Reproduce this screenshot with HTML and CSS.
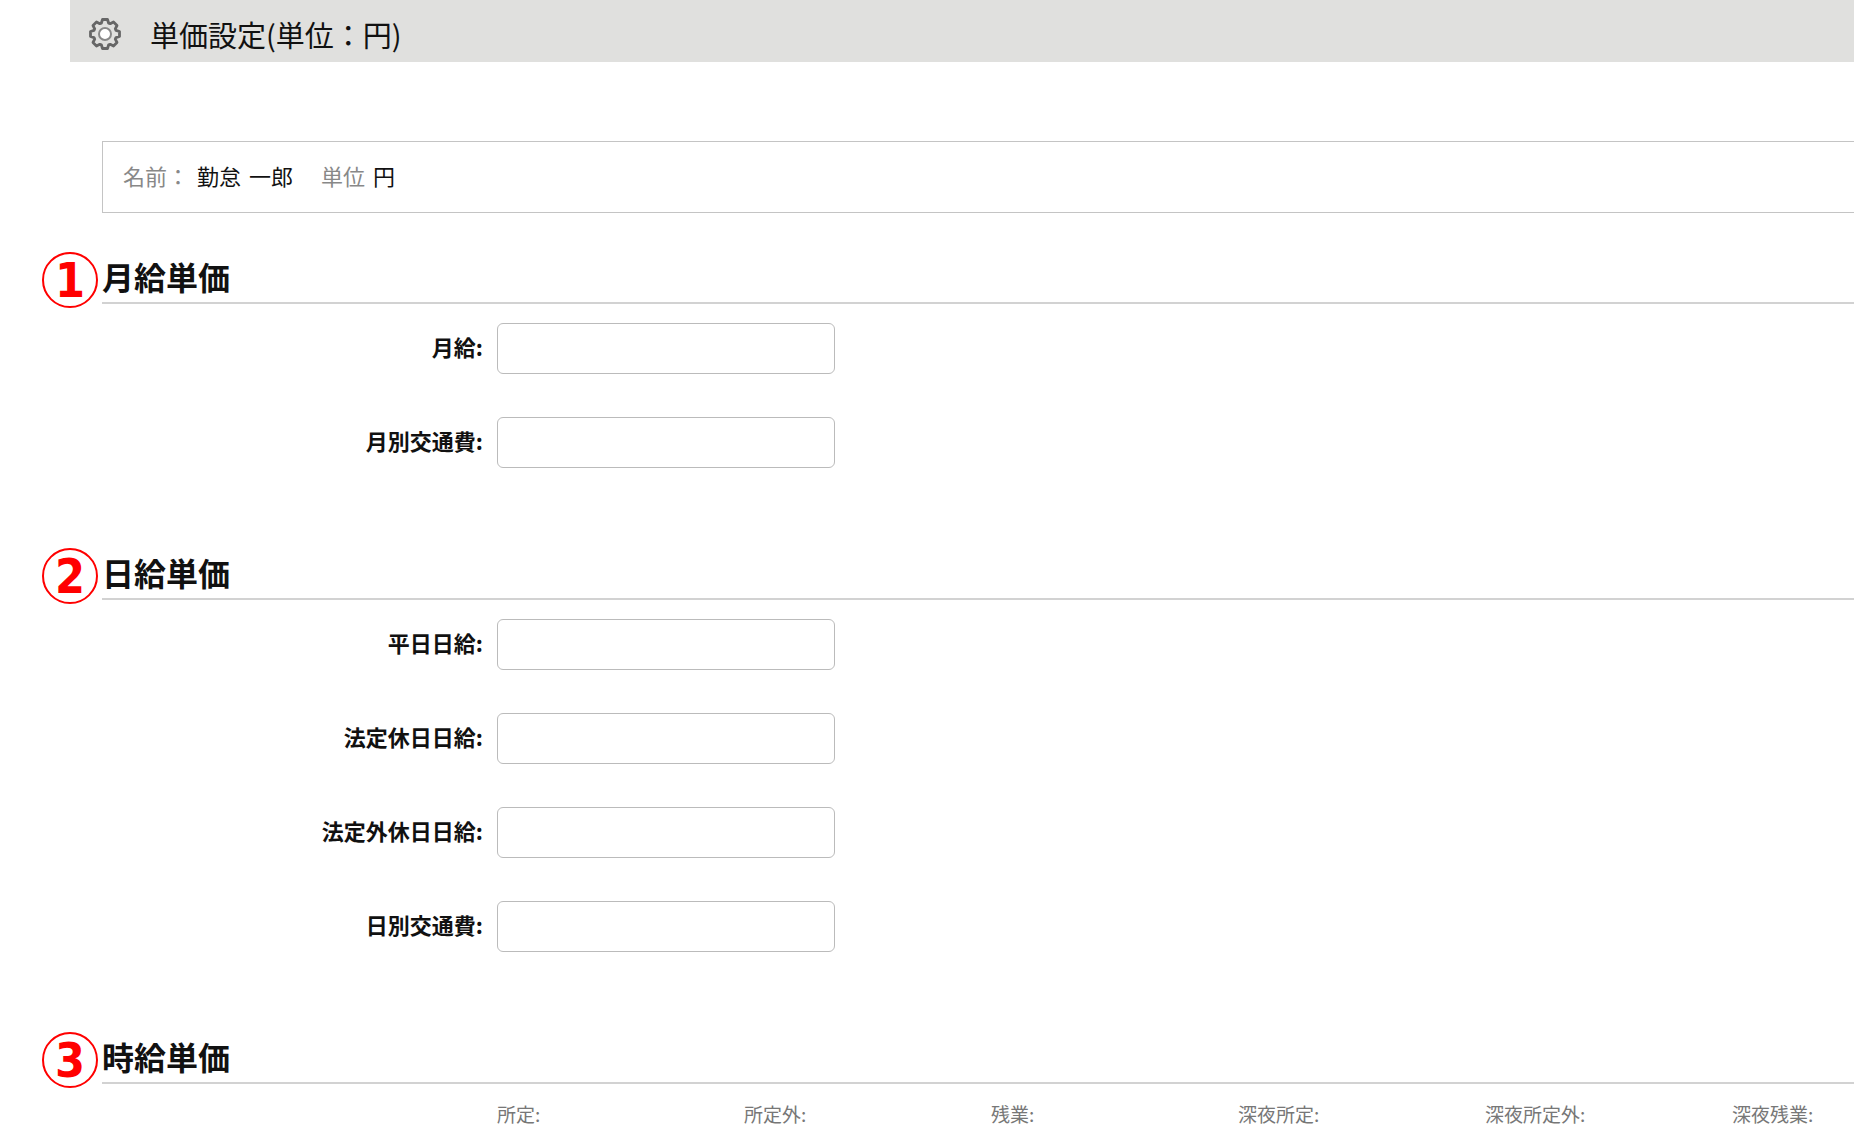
FILE: index.html
```html
<!DOCTYPE html>
<html lang="ja">
<head>
<meta charset="utf-8">
<title>単価設定</title>
<link rel="stylesheet" href="styles.css">
</head>
<body>
<header class="page-header">
  <svg class="gear" viewBox="-16 -16 32 32" aria-hidden="true">
    <path class="gear-body" d="M-2.5-14.5H2.5L3.6-11Q4.3-10.5 5.2-10.3L8.5-12L12-8.5L10.3-5.2Q10.5-4.3 11-3.6L14.5-2.5V2.5L11 3.6Q10.5 4.3 10.3 5.2L12 8.5L8.5 12L5.2 10.3Q4.3 10.5 3.6 11L2.5 14.5H-2.5L-3.6 11Q-4.3 10.5-5.2 10.3L-8.5 12L-12 8.5L-10.3 5.2Q-10.5 4.3-11 3.6L-14.5 2.5V-2.5L-11-3.6Q-10.5-4.3-10.3-5.2L-12-8.5L-8.5-12L-5.2-10.3Q-4.3-10.5-3.6-11Z"/>
    <circle class="gear-hole" r="6"/>
  </svg>
  <h1 class="page-title">単価設定(単位：円)</h1>
</header>
<main class="content">
  <div class="info">
    <span class="info-label">名前：</span>
    <span class="info-name"><span>勤怠</span> <span>一郎</span></span>
    <span class="info-label">単位</span>
    <span class="info-unit">円</span>
  </div>

  <section class="section">
    <h2 class="section-title"><span class="badge">1</span>月給単価</h2>
    <div class="fields">
      <label class="label" for="monthly">月給:</label>
      <input class="input" id="monthly" type="text">
      <label class="label" for="monthly-travel">月別交通費:</label>
      <input class="input" id="monthly-travel" type="text">
    </div>
  </section>

  <section class="section">
    <h2 class="section-title"><span class="badge">2</span>日給単価</h2>
    <div class="fields">
      <label class="label" for="weekday">平日日給:</label>
      <input class="input" id="weekday" type="text">
      <label class="label" for="legal-holiday">法定休日日給:</label>
      <input class="input" id="legal-holiday" type="text">
      <label class="label" for="other-holiday">法定外休日日給:</label>
      <input class="input" id="other-holiday" type="text">
      <label class="label" for="daily-travel">日別交通費:</label>
      <input class="input" id="daily-travel" type="text">
    </div>
  </section>

  <section class="section">
    <h2 class="section-title"><span class="badge">3</span>時給単価</h2>
    <table class="rates">
      <thead>
        <tr>
          <td class="rates-head"></td>
          <th scope="col">所定:</th>
          <th scope="col">所定外:</th>
          <th scope="col">残業:</th>
          <th scope="col">深夜所定:</th>
          <th scope="col">深夜所定外:</th>
          <th scope="col">深夜残業:</th>
        </tr>
      </thead>
    </table>
  </section>
</main>
</body>
</html>
```
FILE: styles.css
```css
* {
  box-sizing: border-box;
}

body {
  margin: 0;
  background: #fff;
  color: #111;
  font-family: "Noto Sans CJK JP", sans-serif;
  font-size: 22px;
  line-height: 32px;
}

.page-header {
  display: flex;
  align-items: center;
  gap: 29px;
  margin-left: 70px;
  padding: 14px 19px 8px;
  background: #e0e0de;
}

.gear {
  flex: none;
  width: 32px;
  height: 32px;
}

.gear-body {
  fill: #e0e0de;
  stroke: #666;
  stroke-width: 2.8;
  stroke-linejoin: round;
}

.gear-hole {
  fill: #fff;
  stroke: #888;
  stroke-width: 2;
}

.page-title {
  margin: 0;
  font-size: 29px;
  font-weight: 400;
  line-height: 40px;
}

.content {
  padding: 79px 0 0 102px;
}

.info {
  display: flex;
  align-items: center;
  border: 1px solid #c4c4c4;
  border-right: 0;
  padding: 17px 0 21px 20px;
}

.info-label {
  color: #888;
}

.info-name {
  display: flex;
  gap: 8px;
  margin-right: 28px;
  margin-left: 8px;
}

.info-unit {
  margin-left: 8px;
}

.section {
  padding-bottom: 83px;
}

.info + .section {
  padding-top: 42px;
}

.section:last-child {
  padding-bottom: 0;
}

.section-title {
  position: relative;
  margin: 0;
  padding-bottom: 5px;
  border-bottom: 2px solid #d2d2d2;
  font-size: 32px;
  font-weight: 700;
  line-height: 42px;
}

.badge {
  position: absolute;
  bottom: -6px;
  left: -60px;
  width: 56px;
  height: 56px;
  border: 2px solid #f00;
  border-radius: 50%;
  color: #f00;
  font-family: "DejaVu Sans Condensed", "DejaVu Sans", sans-serif;
  font-size: 48px;
  line-height: 52px;
  text-align: center;
}

.fields {
  display: grid;
  grid-template-columns: 381px 338px;
  gap: 43px 14px;
  align-items: center;
  padding-top: 19px;
}

.label {
  padding-bottom: 5px;
  font-weight: 700;
  text-align: right;
}

.input {
  width: 100%;
  height: 51px;
  padding: 8px 12px;
  border: 1px solid #bbb;
  border-radius: 6px;
  background: #fff;
  font: inherit;
}

.rates {
  width: 100%;
  margin-top: 18px;
  border-collapse: collapse;
  table-layout: fixed;
}

.rates th {
  width: 247px;
  padding: 0;
  color: #777;
  font-size: 19px;
  font-weight: 400;
  line-height: 24px;
  text-align: left;
  white-space: nowrap;
}

.rates th:last-child {
  width: auto;
}

.rates .rates-head {
  width: 395px;
  padding: 0;
}
```
